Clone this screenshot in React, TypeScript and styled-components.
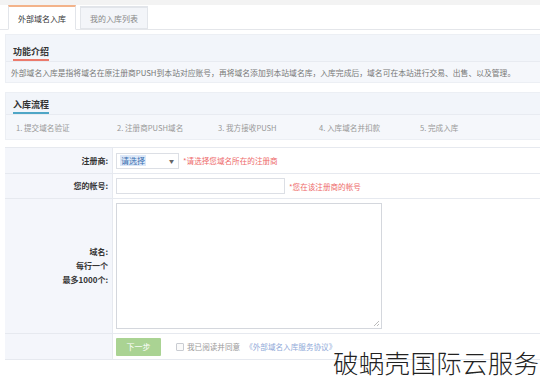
import React from "react";
import styled, { createGlobalStyle } from "styled-components";

const GlobalStyle = createGlobalStyle`
  html, body {
    margin: 0;
    padding: 0;
    background: #f3f3f3;
    font-family: "Noto Sans CJK SC", "Noto Sans", sans-serif;
    color: #333;
  }
`;

const Page = styled.div`
  position: relative;
  width: 540px;
  height: 375px;
  margin-top: 5px;
  background: #fff;
  overflow: hidden;
`;

const TabBar = styled.div`
  display: flex;
  align-items: flex-end;
  gap: 4px;
  height: 24px;
  padding-left: 8px;
  border-bottom: 1px solid #e4e6ea;
`;

const Tab = styled.div<{ $active?: boolean }>`
  box-sizing: border-box;
  height: ${(p) => (p.$active ? "25px" : "23px")};
  margin-bottom: ${(p) => (p.$active ? "-1px" : "0")};
  padding: 0 9px;
  display: flex;
  align-items: center;
  font-size: 8px;
  color: ${(p) => (p.$active ? "#333" : "#888")};
  background: ${(p) => (p.$active ? "#fff" : "#f3f5f9")};
  border: 1px solid #e2e5ea;
  border-top: 2px solid ${(p) => (p.$active ? "#f3b38a" : "#e2e5ea")};
  border-bottom: ${(p) => (p.$active ? "1px solid #fff" : "1px solid #e2e5ea")};
`;

const Content = styled.div`
  padding: 4px 0 0 5px;
  display: flex;
  flex-direction: column;
`;

const Section = styled.div<{ $gap?: number }>`
  margin-bottom: ${(p) => p.$gap ?? 0}px;
  background: #f5f7fb;
  border: 1px solid #eceff4;
  border-right: none;
`;

const SectionHead = styled.div<{ $h: number }>`
  height: ${(p) => p.$h}px;
  padding-left: 7px;
  display: flex;
  align-items: flex-end;
  border-bottom: 1px solid #e8ebf1;
  background: #f2f5fa;
`;

const HeadTitle = styled.div<{ $line: string }>`
  font-size: 9px;
  font-weight: bold;
  color: #333;
  line-height: 12px;
  padding-bottom: 1px;
  margin-bottom: 0;
  border-bottom: 2px solid ${(p) => p.$line};
`;

const Desc = styled.div`
  height: 20px;
  padding-left: 5px;
  display: flex;
  align-items: center;
  font-size: 7.8px;
  color: #777;
  white-space: nowrap;
`;

const Steps = styled.div`
  height: 24px;
  padding-left: 10px;
  display: grid;
  grid-template-columns: repeat(5, 101px);
  align-items: center;
  font-size: 7.6px;
  color: #999;
`;

const Form = styled.div`
  display: grid;
  grid-template-columns: 108px 1fr;
  border-top: 1px solid #e6e9ef;
`;

const Label = styled.div<{ $h: number }>`
  height: ${(p) => p.$h}px;
  box-sizing: border-box;
  background: #f4f6fb;
  border-bottom: 1px solid #e6e9ef;
  border-right: 1px solid #e6e9ef;
  display: flex;
  align-items: center;
  justify-content: flex-end;
  padding-right: 4px;
  font-size: 8px;
  font-weight: bold;
  color: #333;
  text-align: right;
  line-height: 14px;
`;

const Field = styled.div<{ $h: number }>`
  height: ${(p) => p.$h}px;
  box-sizing: border-box;
  border-bottom: 1px solid #e6e9ef;
  display: flex;
  align-items: center;
  padding-left: 3px;
  gap: 4px;
`;

const Select = styled.div`
  box-sizing: border-box;
  width: 63px;
  height: 16px;
  border: 1px solid #dcdfe5;
  display: flex;
  align-items: center;
  justify-content: space-between;
  padding: 0 4px 0 3px;
  font-size: 8px;
  color: #3a6fb0;
`;

const Picked = styled.span`
  background: #dce8f8;
  padding: 0 1px;
`;

const Caret = styled.span`
  font-size: 5px;
  color: #666;
`;

const Hint = styled.span`
  font-size: 7.6px;
  color: #ee6b6b;
`;

const Input = styled.div`
  box-sizing: border-box;
  width: 169px;
  height: 16px;
  border: 1px solid #dcdfe5;
  background: #fff;
`;

const TextArea = styled.div`
  position: relative;
  box-sizing: border-box;
  width: 266px;
  height: 126px;
  border: 1px solid #d4d7dd;
  background: #fff;
`;

const Grip = styled.svg`
  position: absolute;
  right: 1px;
  bottom: 1px;
`;

const Submit = styled.div`
  width: 45px;
  height: 18px;
  background: #aad393;
  color: #fff;
  font-size: 8px;
  display: flex;
  align-items: center;
  justify-content: center;
  border-radius: 1px;
`;

const Agree = styled.div`
  margin-left: 11px;
  display: flex;
  align-items: center;
  gap: 3px;
  font-size: 7.6px;
  color: #999;
`;

const Check = styled.span`
  width: 6px;
  height: 6px;
  border: 1px solid #c9ccd2;
  border-radius: 1px;
  background: #fafafa;
`;

const Link = styled.span`
  color: #8fa9d8;
  margin-left: 2px;
`;

const Watermark = styled.div`
  position: absolute;
  left: 333px;
  top: 338px;
  font-size: 25.5px;
  font-weight: 300;
  color: #222;
  letter-spacing: 0.3px;
  white-space: nowrap;
`;

const steps = [
  "1. 提交域名验证",
  "2. 注册商PUSH域名",
  "3. 我方接收PUSH",
  "4. 入库域名并扣款",
  "5. 完成入库",
];

const App: React.FC = () => {
  return (
    <>
      <GlobalStyle />
      <Page>
        <TabBar>
          <Tab $active>外部域名入库</Tab>
          <Tab>我的入库列表</Tab>
        </TabBar>
        <Content>
          <Section $gap={9}>
            <SectionHead $h={26}>
              <HeadTitle $line="#ec7a6c">功能介绍</HeadTitle>
            </SectionHead>
            <Desc>
              外部域名入库是指将域名在原注册商PUSH到本站对应账号，再将域名添加到本站域名库，入库完成后，域名可在本站进行交易、出售、以及管理。
            </Desc>
          </Section>
          <Section $gap={7}>
            <SectionHead $h={21}>
              <HeadTitle $line="#4fa6c6">入库流程</HeadTitle>
            </SectionHead>
            <Steps>
              {steps.map((s) => (
                <span key={s}>{s}</span>
              ))}
            </Steps>
          </Section>
          <Form>
            <Label $h={26}>注册商:</Label>
            <Field $h={26}>
              <Select>
                <Picked>请选择</Picked>
                <Caret>▼</Caret>
              </Select>
              <Hint>*请选择您域名所在的注册商</Hint>
            </Field>
            <Label $h={25}>您的帐号:</Label>
            <Field $h={25}>
              <Input />
              <Hint>*您在该注册商的帐号</Hint>
            </Field>
            <Label $h={135}>
              <div>
                域名:
                <br />
                每行一个
                <br />
                最多1000个:
              </div>
            </Label>
            <Field $h={135}>
              <TextArea>
                <Grip width="7" height="7" viewBox="0 0 7 7">
                  <path d="M6 1 L1 6 M6 4 L4 6" stroke="#aaa" strokeWidth="0.8" />
                </Grip>
              </TextArea>
            </Field>
            <Label $h={26} />
            <Field $h={26}>
              <Submit>下一步</Submit>
              <Agree>
                <Check />
                我已阅读并同意
                <Link>《外部域名入库服务协议》</Link>
              </Agree>
            </Field>
          </Form>
        </Content>
        <Watermark>破蜗壳国际云服务</Watermark>
      </Page>
    </>
  );
};

export default App;
